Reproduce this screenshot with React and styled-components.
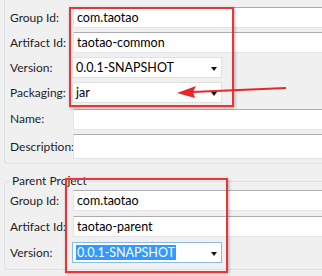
import React from 'react';
import styled, { createGlobalStyle } from 'styled-components';

const GlobalStyle = createGlobalStyle`
  html, body {
    margin: 0;
    padding: 0;
    background: #f0f0f0;
    overflow: hidden;
  }
  body {
    font-family: Lato, "Noto Sans", sans-serif;
    font-size: 12px;
    color: #1e1e1e;
  }
`;

const Page = styled.div`
  position: relative;
  width: 322px;
  height: 276px;
  overflow: hidden;
  background: #f0f0f0;
`;

const TopPanel = styled.div`
  margin-left: 4px;
  width: 340px;
  border: 1px solid #d9e0e6;
  border-top: none;
  border-right: none;
  border-radius: 0 0 0 4px;
  padding: 7px 0 4px 5px;
`;

const Group = styled.fieldset`
  margin: 9px 0 0 4px;
  width: 340px;
  border: 1px solid #d9e0e6;
  border-right: none;
  border-radius: 4px 0 0 4px;
  padding: 1px 0 6px 5px;
  box-sizing: border-box;
`;

const Legend = styled.legend`
  padding: 0 2px;
  line-height: 16px;
  color: #1e1e1e;
`;

const Form = styled.div`
  display: grid;
  grid-template-columns: 63px 1fr;
  row-gap: ${(p) => p.$gap || 4}px;
  align-items: center;
`;

const Label = styled.div`
  line-height: 16px;
  white-space: nowrap;
`;

const TextField = styled.div`
  height: ${(p) => p.$h || 21}px;
  box-sizing: border-box;
  background: #fff;
  border: 1px solid #e3e4ea;
  border-top-color: #abadb3;
  border-right: none;
  padding-left: 3px;
  display: flex;
  align-items: center;
  color: #000;
  white-space: nowrap;
  font-size: 12.5px;
`;

const Combo = styled.div`
  margin-left: -1px;
  width: 150px;
  height: 21px;
  box-sizing: border-box;
  background: #fff;
  border: 1px solid ${(p) => (p.$focus ? '#8cbbe8' : '#e1e1e1')};
  display: flex;
  align-items: center;
  justify-content: space-between;
  padding: 0 4px 0 3px;
  color: #000;
  font-size: 12.5px;
`;

const Selected = styled.span`
  background: #3399ff;
  color: #fff;
  padding: 0 1px;
  line-height: 15px;
`;

const Caret = styled.span`
  width: 0;
  height: 0;
  border-left: 3px solid transparent;
  border-right: 3px solid transparent;
  border-top: 4px solid #111;
  margin-top: 2px;
`;

const Highlight = styled.div`
  position: absolute;
  left: ${(p) => p.$x}px;
  top: ${(p) => p.$y}px;
  width: ${(p) => p.$w}px;
  height: ${(p) => p.$h}px;
  border: 2px solid #e8353a;
  box-sizing: border-box;
  box-shadow: 1px 1px 3px rgba(0, 0, 0, 0.3);
  pointer-events: none;
`;

const Arrow = styled.svg`
  position: absolute;
  left: 0;
  top: 0;
  pointer-events: none;
`;

const Row = ({ label, children }) => (
  <>
    <Label>{label}</Label>
    {children}
  </>
);

const App = () => (
  <Page>
    <GlobalStyle />
    <TopPanel>
      <Form>
        <Row label="Group Id:">
          <TextField>com.taotao</TextField>
        </Row>
        <Row label="Artifact Id:">
          <TextField>taotao-common</TextField>
        </Row>
        <Row label="Version:">
          <Combo>
            <span>0.0.1-SNAPSHOT</span>
            <Caret />
          </Combo>
        </Row>
        <Row label="Packaging:">
          <Combo>
            <span>jar</span>
            <Caret />
          </Combo>
        </Row>
        <Row label="Name:">
          <TextField style={{ marginTop: 2 }} />
        </Row>
        <Row label="Description:">
          <TextField $h={25} />
        </Row>
      </Form>
    </TopPanel>
    <Group>
      <Legend>Parent Project</Legend>
      <Form $gap={5}>
        <Row label="Group Id:">
          <TextField>com.taotao</TextField>
        </Row>
        <Row label="Artifact Id:">
          <TextField>taotao-parent</TextField>
        </Row>
        <Row label="Version:">
          <Combo $focus>
            <Selected>0.0.1-SNAPSHOT</Selected>
            <Caret />
          </Combo>
        </Row>
      </Form>
    </Group>
    <Highlight $x={69} $y={7} $w={165} $h={100} />
    <Highlight $x={65} $y={178} $w={163} $h={95} />
    <Arrow width="322" height="276" viewBox="0 0 322 276">
      <path d="M286 88 L192 92" stroke="#e8262a" strokeWidth="2" fill="none" />
      <path d="M177 93 L196 86 L193 92 L195 98 Z" fill="#e8262a" />
    </Arrow>
  </Page>
);

export default App;
